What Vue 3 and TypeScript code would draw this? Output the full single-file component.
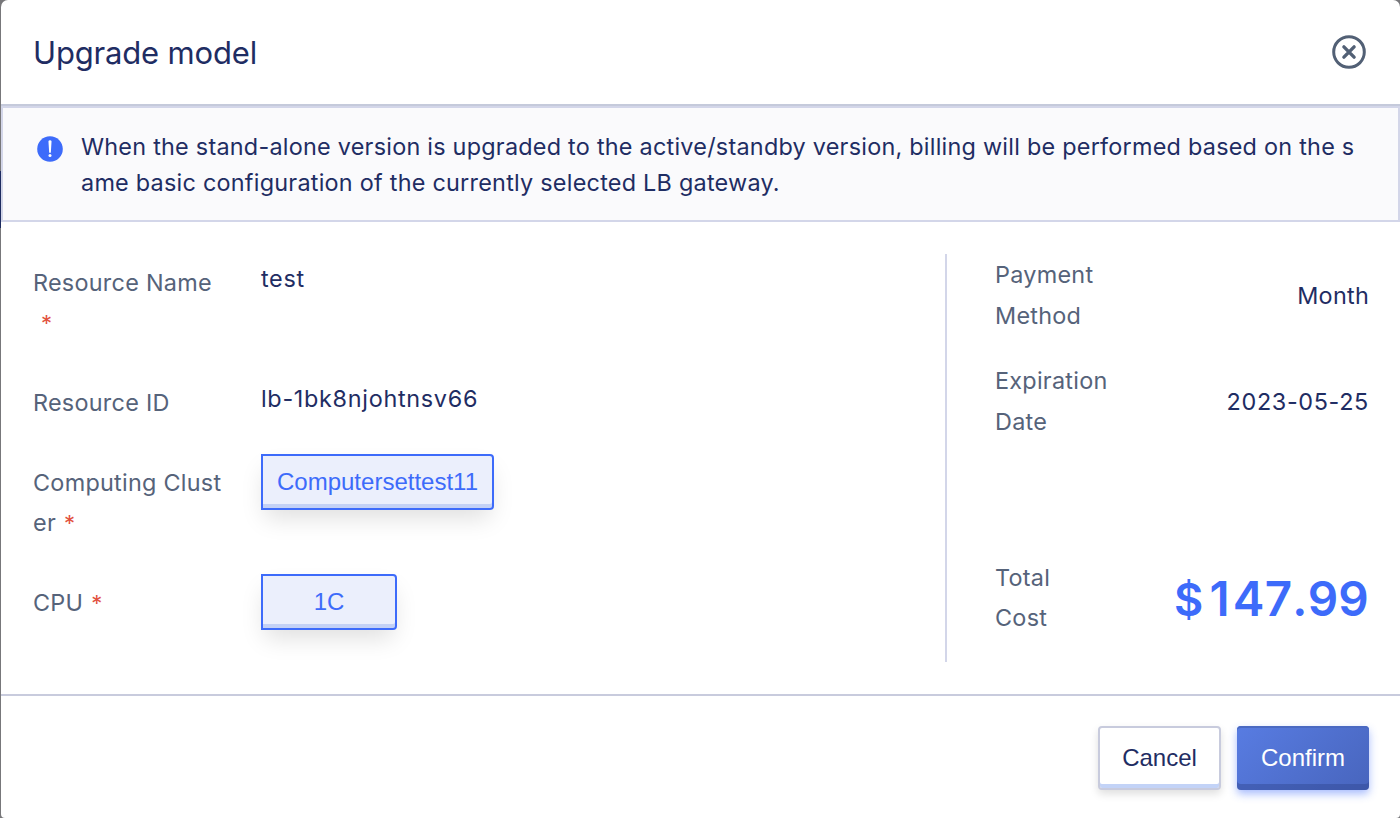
<script setup lang="ts">
interface Field {
  key: string
  label: string[]
  required: boolean
  value: string
  kind: 'text' | 'option'
}

const fields: Field[] = [
  { key: 'name', label: ['Resource Name', ''], required: true, value: 'test', kind: 'text' },
  { key: 'id', label: ['Resource ID'], required: false, value: 'lb-1bk8njohtnsv66', kind: 'text' },
  { key: 'cluster', label: ['Computing Clust', 'er'], required: true, value: 'Computersettest11', kind: 'option' },
  { key: 'cpu', label: ['CPU'], required: true, value: '1C', kind: 'option' },
]

const notice: string[] = [
  'When the stand-alone version is upgraded to the active/standby version, billing will be performed based on the s',
  'ame basic configuration of the currently selected LB gateway.',
]
</script>

<template>
  <div class="backdrop">
    <section class="modal">
      <header class="head">
        <h1 class="title">Upgrade model</h1>
        <button class="close" aria-label="Close">
          <svg width="34" height="34" viewBox="0 0 34 34" fill="none" stroke="#526075">
            <circle cx="17" cy="17" r="15.3" stroke-width="3" />
            <path d="M11.9 11.9 22.1 22.1M22.1 11.9 11.9 22.1" stroke-width="3.4" stroke-linecap="round" />
          </svg>
        </button>
      </header>

      <div class="alert">
        <svg class="info" width="26" height="26" viewBox="0 0 26 26">
          <circle cx="13" cy="13" r="12.8" fill="#3d6bfa" />
          <path d="M11.5 5.4Q11.5 4.3 13 4.3Q14.5 4.3 14.5 5.4L13.8 16.7H12.2Z" fill="#fff" />
          <circle cx="13" cy="19.6" r="1.5" fill="#fff" />
        </svg>
        <p class="notice">
          <span v-for="(line, i) in notice" :key="i" class="line">{{ line }}</span>
        </p>
      </div>

      <div class="body">
        <div class="form">
          <div v-for="f in fields" :key="f.key" :class="['row', f.key]">
            <div class="label">
              <div v-for="(line, i) in f.label" :key="i" class="line">
                <span>{{ line }}</span><span v-if="f.required && i === f.label.length - 1" class="star">*</span>
              </div>
            </div>
            <div v-if="f.kind === 'text'" class="value">{{ f.value }}</div>
            <button v-else class="option">{{ f.value }}</button>
          </div>
        </div>

        <aside class="summary">
          <div class="item">
            <div class="term">Payment<br />Method</div>
            <div class="detail">Month</div>
          </div>
          <div class="item">
            <div class="term">Expiration<br />Date</div>
            <div class="detail date">2023-05-25</div>
          </div>
          <div class="item total">
            <div class="term">Total<br />Cost</div>
            <div class="price"><span class="currency">$</span><span class="lead">1</span>47.99</div>
          </div>
        </aside>
      </div>

      <footer class="foot">
        <button class="btn cancel">Cancel</button>
        <button class="btn confirm">Confirm</button>
      </footer>
    </section>
  </div>
</template>

<style>
body {
  margin: 0;
  overflow: hidden;
}
</style>

<style scoped>
.backdrop {
  box-sizing: border-box;
  width: 1400px;
  height: 818px;
  padding-left: 1px;
  background: linear-gradient(#77777a 0 171px, #1d2b60 171px 228px, #77777a 228px);
  font-family: Inter, 'Liberation Sans', sans-serif;
  font-size: 23.4px;
  letter-spacing: 0.26px;
  color: #1f2d63;
  white-space: nowrap;
}
.modal {
  height: 818px;
  display: flex;
  flex-direction: column;
  background: #fff;
  border-radius: 7px 7px 4px 4px;
  overflow: hidden;
}
button {
  box-sizing: border-box;
  margin: 0;
  font-family: 'Liberation Sans', Arial, sans-serif;
  font-size: 24px;
}
.head {
  box-sizing: border-box;
  height: 106px;
  flex: none;
  padding: 0 34px 0 32px;
  display: flex;
  align-items: center;
  justify-content: space-between;
  border-bottom: 2px solid #c5cadb;
}
.title {
  margin: 0;
  padding-top: 2px;
  font-size: 31px;
  font-weight: 400;
  line-height: 40px;
  letter-spacing: -0.17px;
}
.close {
  padding: 0;
  border: 0;
  background: none;
  width: 34px;
  height: 34px;
}
.close svg {
  display: block;
}
.alert {
  box-sizing: border-box;
  flex: none;
  height: 116px;
  border: 2px solid #d3d6e9;
  background: #fafafc;
  padding: 21px 34px;
  display: flex;
  gap: 18px;
}
.info {
  flex: none;
  margin-top: 7px;
}
.notice {
  margin: 0;
  line-height: 36px;
  letter-spacing: 0.245px;
}
.line {
  display: block;
}
.body {
  height: 472px;
  box-sizing: border-box;
  flex: none;
  padding: 32px 31px 32px 32px;
  display: flex;
}
.form {
  flex: 1;
}
.row {
  display: flex;
  height: 80px;
}
.row.name,
.row.cluster {
  height: 120px;
}
.label {
  width: 228px;
  flex: none;
  padding-top: 9px;
  line-height: 40px;
  color: #56637a;
}
.label .line {
  height: 40px;
}
.star {
  margin-left: 8px;
  font-size: 22px;
  color: #e2513e;
}
.value {
  line-height: 50px;
  letter-spacing: 0.7px;
}
.option {
  height: 56px;
  min-width: 136px;
  padding: 0 14px;
  color: #3d6bfa;
  background: #ebeffc;
  border: 2px solid #3d6bfa;
  border-radius: 0 4px 4px 0;
  box-shadow: inset 0 -4px 0 #c3d1f6, 0 12px 24px -4px rgba(0, 0, 0, 0.13);
}
.summary {
  box-sizing: border-box;
  width: 424px;
  border-left: 2px solid #d3d6e9;
  padding-left: 48px;
  display: flex;
  flex-direction: column;
  gap: 24px;
}
.item {
  display: flex;
  justify-content: space-between;
  align-items: center;
}
.term {
  line-height: 41px;
  color: #56637a;
}
.date {
  letter-spacing: 0.65px;
}
.total {
  margin-top: auto;
  margin-bottom: 24px;
}
.total .term {
  line-height: 40px;
}
.price {
  padding-top: 3px;
  font-size: 47.6px;
  font-weight: 600;
  font-kerning: none;
  line-height: 60px;
  letter-spacing: 0.2px;
  color: #3d6bfa;
}
.currency {
  font-size: 45px;
  margin-right: 6px;
}
.lead {
  margin-right: 3px;
}
.foot {
  box-sizing: border-box;
  flex: 1;
  border-top: 2px solid #c8cbdd;
  padding: 30px 31px 0;
  display: flex;
  justify-content: flex-end;
  gap: 16px;
}
.btn {
  height: 64px;
  border-radius: 4px;
  padding: 0;
}
.cancel {
  width: 123px;
  color: #1f2d63;
  background: #fff;
  border: 2px solid #c8cbdd;
  box-shadow: inset 0 -4px 0 #c3d3f7, 0 4px 8px rgba(0, 0, 0, 0.13);
}
.confirm {
  width: 132px;
  color: #fff;
  border: 0;
  background: linear-gradient(135deg, #587ce2, #4865bd);
  box-shadow: inset 0 2px 0 #4a69c2, inset 0 -6px 0 rgba(48, 72, 145, 0.45), 0 4px 8px rgba(61, 107, 250, 0.45);
}
</style>
